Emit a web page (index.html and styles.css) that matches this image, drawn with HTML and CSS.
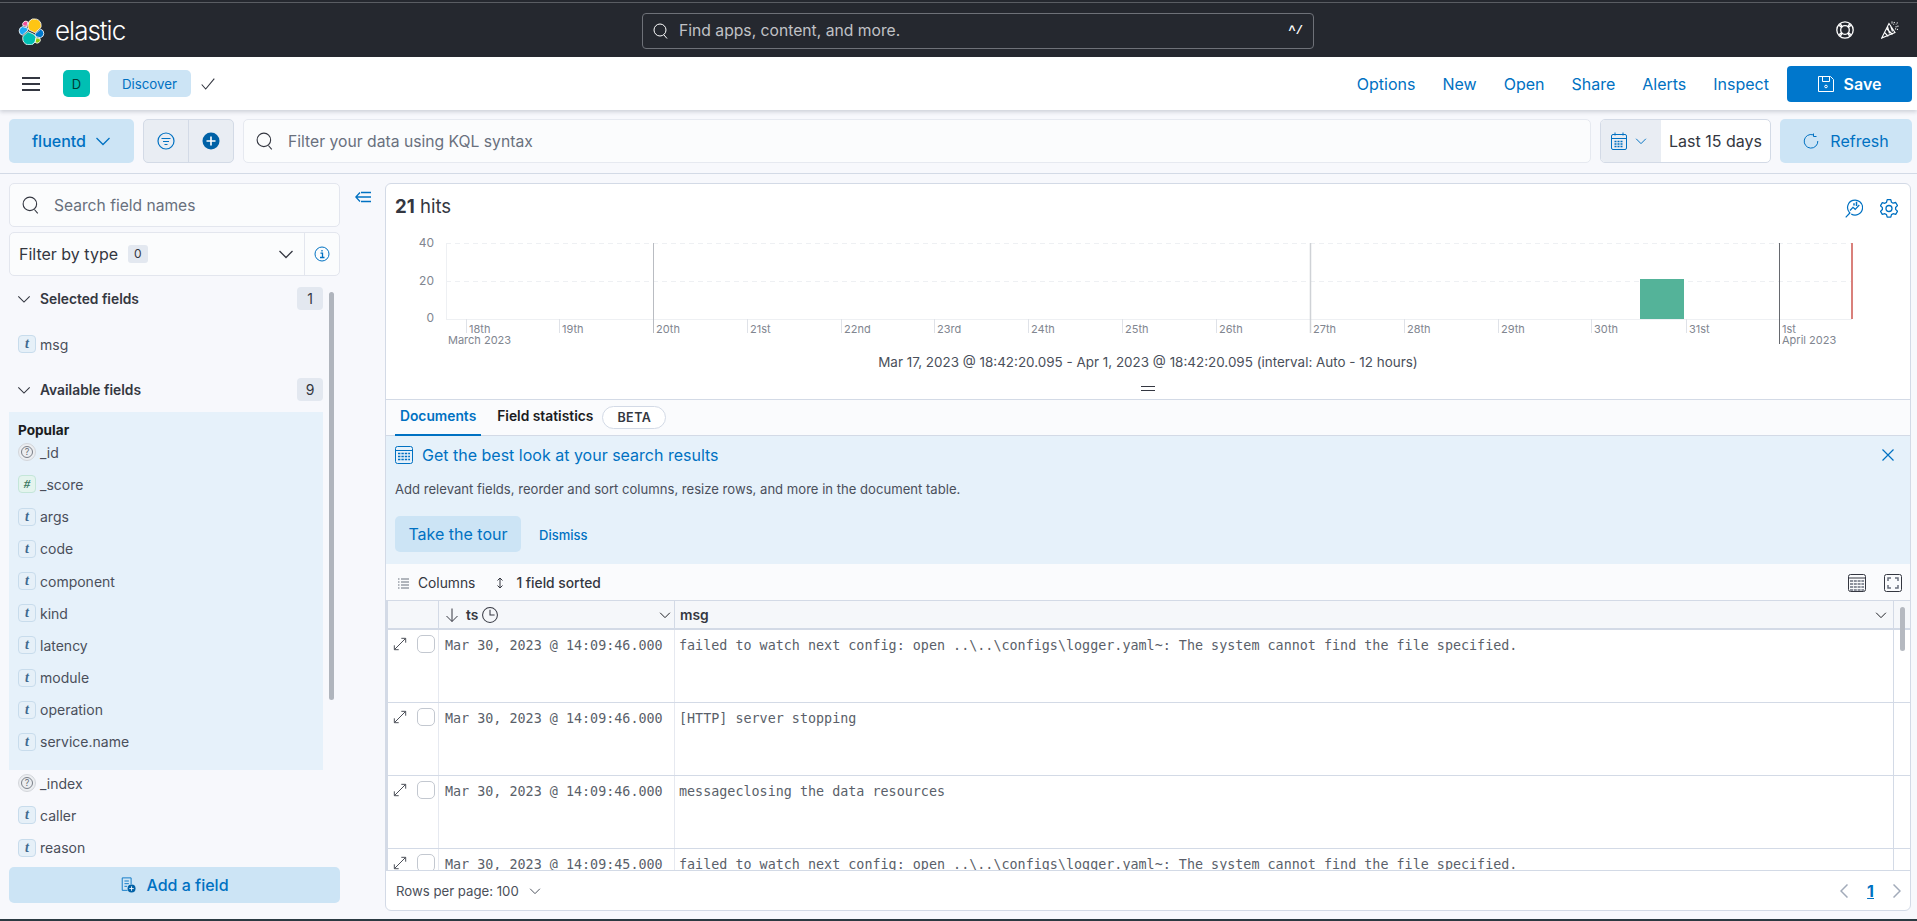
FILE: index.html
```html
<!DOCTYPE html>
<html lang="en">
<head>
<meta charset="utf-8">
<title>Discover - Elastic</title>
<link rel="stylesheet" href="styles.css">
</head>
<body>
<svg class="sprite" xmlns="http://www.w3.org/2000/svg">
  <symbol id="i-search" viewBox="0 0 16 16"><circle cx="7" cy="7" r="6" fill="none" stroke="currentColor"/><path d="M11 12l3 3.5" fill="none" stroke="currentColor"/></symbol>
  <symbol id="i-chev" viewBox="0 0 16 16"><path d="M1.500 5l6.500 6.500L14.500 5" fill="none" stroke="currentColor" stroke-width="1.300"/></symbol>
  <symbol id="i-expand" viewBox="0 0 16 16"><path d="M2 14L14 2M9.500 1.500h5v5M1.500 9.500v5h5" fill="none" stroke="currentColor"/></symbol>
</svg>

<div class="topline"></div>
<header class="globalbar">
  <a class="brand">
    <svg class="logo" viewBox="0 0 32 32"><g stroke="#fff" stroke-width="1"><path fill="#FEC514" d="M13.100 14.300l7 3.200 7-6.200a8 8 0 0 0 .3-2.300 8 8 0 0 0-14.500-4.700l-1.200 6.100z"/><path fill="#00BFB3" d="M5.900 21.700a8.300 8.300 0 0 0-.3 2.300 8 8 0 0 0 14.600 4.600l1.200-6-2.600-3.300-7-3.200z"/><path fill="#F04E98" d="M5.800 9l4.800 1.100 1.100-5.500a3.800 3.800 0 0 0-5.900 4.400"/><path fill="#1BA9F5" d="M5.400 10.200a5.300 5.300 0 0 0-.3 10.200l6.800-6.100-1.200-2.700z"/><path fill="#93C90E" d="M20.300 28.900a3.800 3.800 0 0 0 5.900-4.400l-4.800-1.100z"/><path fill="#0077CC" d="M21.300 22.200l5.300 1.200a5.300 5.300 0 0 0 .2-10.200l-6.900 6z"/></g></svg>
    <span class="brand-name">elastic</span>
  </a>
  <div class="globalsearch">
    <svg class="ic16"><use href="#i-search"/></svg>
    <span class="globalsearch-text">Find apps, content, and more.</span>
    <span class="kbd">^/</span>
  </div>
  <div class="globalicons">
    <svg class="ic18" viewBox="0 0 18 18" fill="none" stroke="#fff" stroke-width="1.300"><circle cx="9" cy="9" r="8.200"/><circle cx="9" cy="9" r="4.300"/><path d="M2.900 4.300l3.200 2.300M4.300 2.900l2.300 3.200M15.100 4.300l-3.200 2.300M13.700 2.900l-2.300 3.200M2.900 13.700l3.200-2.300M4.300 15.100l2.300-3.200M15.100 13.700l-3.200-2.300M13.700 15.100l-2.300-3.200"/></svg>
    <svg class="ic18" viewBox="0 0 18 18" fill="none" stroke="#fff" stroke-width="1.100"><path d="M8 2.500L.7 17l13.300-5.500zM5.500 7.500l6 6M3.500 11.500l3.800 3.800M6.500 5.500l2 7M9.500 4.500l2 6"/><path d="M11 .5v2.500M13.500 1l-1 2.500M16.500 1.500L15 3.500M17.500 5l-3 1M17 8.500l-3-.7" stroke-dasharray="1.200 .8"/></svg>
  </div>
</header>

<nav class="appbar">
  <button class="burger" aria-label="Menu"><span></span><span></span><span></span></button>
  <span class="avatar">D</span>
  <span class="crumb">Discover</span>
  <svg class="crumb-check" viewBox="0 0 14 12" fill="none" stroke="#343741" stroke-width="1.100"><path d="M.7 6.500l4 4.500L13.300.7"/></svg>
  <div class="appmenu">
    <a>Options</a><a>New</a><a>Open</a><a>Share</a><a>Alerts</a><a>Inspect</a>
    <button class="btn-save">
      <svg class="ic16" viewBox="0 0 16 16" fill="none" stroke="#fff"><path d="M.5.500h12l3 3v12H.500zM4.500.5v5h7v-5"/><circle cx="8" cy="10.500" r="1.300"/></svg>
      Save
    </button>
  </div>
</nav>

<section class="querybar">
  <button class="btn-light btn-index">fluentd <svg class="ic16"><use href="#i-chev"/></svg></button>
  <div class="btngroup">
    <span class="btngroup-item"><svg class="ic18" viewBox="0 0 18 18" fill="none" stroke="#0071c2" stroke-width="1.200"><circle cx="9" cy="9" r="8"/><path d="M4.500 6.500h9M6 9.500h6M7.500 12.500h3"/></svg></span>
    <span class="btngroup-item"><svg class="ic18" viewBox="0 0 18 18"><circle cx="9" cy="9" r="8.500" fill="#0061a6"/><path d="M9 4.500v9M4.500 9h9" stroke="#fff" stroke-width="1.600"/></svg></span>
  </div>
  <div class="kql">
    <svg class="ic18 muted"><use href="#i-search"/></svg>
    <span>Filter your data using KQL syntax</span>
  </div>
  <div class="datepicker">
    <span class="datepicker-pre">
      <svg class="ic16 cal" viewBox="0 0 16 18" fill="none" stroke="#0071c2"><rect x=".5" y="2.500" width="15" height="15" rx="1.500"/><path d="M.5 6.500h15M4 .5v3M12 .5v3"/><path d="M3.500 9.500h9M3.500 12h9M3.500 14.500h9" stroke-width="1.400" stroke-dasharray="2 1"/></svg>
      <svg class="ic12"><use href="#i-chev"/></svg>
    </span>
    <span class="datepicker-value">Last 15 days</span>
  </div>
  <button class="btn-light btn-refresh">
    <svg class="ic16" viewBox="0 0 16 16" fill="none" stroke="#0071c2"><path d="M10 1.800A6.800 6.800 0 1 0 14.800 8M10.500 .5v3h3"/></svg>
    Refresh
  </button>
</section>

<div class="workspace">
  <aside class="sidebar">
    <div class="field-search">
      <svg class="ic18 muted"><use href="#i-search"/></svg>
      <span>Search field names</span>
    </div>
    <div class="type-filter">
      <span class="type-filter-label">Filter by type</span>
      <span class="type-filter-count">0</span>
      <svg class="ic16 chev-type"><use href="#i-chev"/></svg>
      <span class="type-filter-info"><svg class="ic16" viewBox="0 0 16 16" fill="none" stroke="#0071c2"><circle cx="8" cy="8" r="7"/><path d="M6.500 7.200h2v4.300M6 11.500h4.500M8 4v1.500" stroke-width="1.300"/></svg></span>
    </div>
    <div class="fieldlist">
      <div class="section-head first"><svg class="ic14"><use href="#i-chev"/></svg><span class="section-title">Selected fields</span><span class="section-count">1</span></div>
      <div class="field"><span class="tok tok-t">t</span>msg</div>
      <div class="section-head"><svg class="ic14"><use href="#i-chev"/></svg><span class="section-title">Available fields</span><span class="section-count">9</span></div>
      <div class="popular">
        <div class="popular-title">Popular</div>
        <div class="field"><span class="tok tok-q"><i>?</i></span>_id</div>
        <div class="field"><span class="tok tok-n">#</span>_score</div>
        <div class="field"><span class="tok tok-t">t</span>args</div>
        <div class="field"><span class="tok tok-t">t</span>code</div>
        <div class="field"><span class="tok tok-t">t</span>component</div>
        <div class="field"><span class="tok tok-t">t</span>kind</div>
        <div class="field"><span class="tok tok-t">t</span>latency</div>
        <div class="field"><span class="tok tok-t">t</span>module</div>
        <div class="field"><span class="tok tok-t">t</span>operation</div>
        <div class="field"><span class="tok tok-t">t</span>service.name</div>
      </div>
      <div class="rest">
        <div class="field"><span class="tok tok-q"><i>?</i></span>_index</div>
        <div class="field"><span class="tok tok-t">t</span>caller</div>
        <div class="field"><span class="tok tok-t">t</span>reason</div>
      </div>
      <span class="sidebar-thumb"></span>
    </div>
    <button class="btn-light btn-add">
      <svg class="ic16" viewBox="0 0 16 18" fill="none" stroke="#0071c2"><path d="M1.500 1h10v7M1.500 1v14h6M4 4.500h5M4 7.500h5M4 10.500h3"/><circle cx="12" cy="13" r="4.500" fill="#0061a6" stroke="none"/><path d="M12 10.500v5M9.500 13h5" stroke="#fff"/></svg>
      Add a field
    </button>
  </aside>

  <div class="togglecol">
    <svg class="toggle" viewBox="0 0 16 12" fill="none" stroke="#0071c2" stroke-width="1.300"><path d="M5 1.500L.8 6 5 10.500M1 6h15M6 1.500h10M6 10.500h10"/></svg>
  </div>

  <main class="panel">
    <div class="hitsrow">
      <span class="hits"><b>21</b> hits</span>
      <span class="hits-icons">
        <svg class="ic-tool" viewBox="0 0 18 19" fill="none" stroke="#0071c2" stroke-width="1.200"><path d="M4.500 13.600A7.500 7.500 0 1 1 6.200 15M5.300 13.500l-4.600 4.800M5 11.500l3-3.200 2.200 2L14.300 6"/><path d="M9 6.500V4.200M11.500 7V2.700" stroke-width="1.500"/></svg>
        <svg class="ic-tool" viewBox="0 0 18 19" fill="none" stroke="#0071c2" stroke-width="1.300" stroke-linejoin="round"><path d="M7.200.7h3.600l.7 2.600 1.600.9 2.600-.7 1.800 3.100-1.900 1.900v1.900l1.900 1.900-1.800 3.100-2.600-.7-1.600.9-.7 2.600H7.200l-.7-2.600-1.600-.9-2.600.7L.5 12.400l1.900-1.900V8.600L.5 6.700l1.800-3.100 2.600.7 1.600-.9z"/><circle cx="9" cy="9.500" r="3"/></svg>
      </span>
    </div>
    <svg class="chart" width="1524" height="120" viewBox="0 0 1524 120">
      <g stroke="#eef0f3" fill="none">
        <path d="M60 9.500h1406M60 47.500h1406" stroke-dasharray="5 4"/>
        <path d="M60.500 9v76M60 85.500h1406"/>
      </g>
      <g stroke="#dfe2e8">
        <path d="M80.500 85v14M173.500 85v14M361.500 85v14M455.500 85v14M548.500 85v14M642.500 85v14M736.500 85v14M830.500 85v14M1018.500 85v14M1112.500 85v14M1205.500 85v14M1300.500 85v14"/>
      </g>
      <path d="M267.500 9v90" stroke="#b9bcc2"/>
      <path d="M924.500 9v90" stroke="#cfd2d6" stroke-width="1.500"/>
      <path d="M1393.500 9v101" stroke="#66696f"/>
      <rect x="1254" y="45" width="44" height="40" fill="#54b399"/>
      <rect x="1465" y="9" width="2" height="76" fill="#d9807b"/>
      <g class="chart-y" text-anchor="end">
        <text x="48" y="13">40</text><text x="48" y="51">20</text><text x="48" y="88">0</text>
      </g>
      <g class="chart-x">
        <text x="83" y="99">18th</text><text x="176" y="99">19th</text><text x="270" y="99">20th</text><text x="364" y="99">21st</text><text x="458" y="99">22nd</text><text x="551" y="99">23rd</text><text x="645" y="99">24th</text><text x="739" y="99">25th</text><text x="833" y="99">26th</text><text x="927" y="99">27th</text><text x="1021" y="99">28th</text><text x="1115" y="99">29th</text><text x="1208" y="99">30th</text><text x="1303" y="99">31st</text><text x="1396" y="99">1st</text>
        <text x="62" y="110">March 2023</text><text x="1396" y="110">April 2023</text>
      </g>
    </svg>
    <div class="interval">Mar 17, 2023 @ 18:42:20.095 - Apr 1, 2023 @ 18:42:20.095 (interval: Auto - 12 hours)</div>
    <div class="resizer"><span></span></div>

    <div class="tabs">
      <span class="tab tab-active">Documents</span>
      <span class="tab">Field statistics</span>
      <span class="beta">BETA</span>
    </div>

    <div class="callout">
      <div class="callout-title">
        <svg class="ic18" viewBox="0 0 18 18" fill="none" stroke="#0071c2"><rect x=".5" y=".5" width="17" height="17" rx="2"/><path d="M.5 4.500h17"/><path d="M3 7.500h12M3 10.500h12M3 13.500h12" stroke-width="1.500" stroke-dasharray="2.400 1"/></svg>
        Get the best look at your search results
        <svg class="callout-close" viewBox="0 0 12 12" fill="none" stroke="#0071c2" stroke-width="1.200"><path d="M.5.500l11 11M11.500.500l-11 11"/></svg>
      </div>
      <p class="callout-body">Add relevant fields, reorder and sort columns, resize rows, and more in the document table.</p>
      <div class="callout-actions">
        <button class="btn-light btn-tour">Take the tour</button>
        <a class="dismiss">Dismiss</a>
      </div>
    </div>

    <div class="gridtools">
      <svg class="ic12 tool" viewBox="0 0 12 12" stroke="#69707d" fill="none"><path d="M1 2h1.500M4 2h8M1 5h1.500M4 5h8M1 8h1.500M4 8h8M1 11h1.500M4 11h8"/></svg>
      <span class="tool-label">Columns</span>
      <svg class="ic12 tool tool-sort" viewBox="0 0 12 12" stroke="#343741" fill="none"><path d="M6 1v10M3.500 3.500L6 1l2.500 2.500M3.500 8.500L6 11l2.500-2.500"/></svg>
      <span class="tool-label tool-medium">1 field sorted</span>
      <span class="tool-right">
        <svg class="ic18" viewBox="0 0 18 18" fill="none" stroke="#343741"><rect x=".5" y=".5" width="17" height="17" rx="2"/><path d="M.5 4h17"/><path d="M2 7h14M2 10h14M2 13h14M2 16h14" stroke="#69707d" stroke-width="1.500" stroke-dasharray="3 .8"/></svg>
        <svg class="ic18" viewBox="0 0 18 18" fill="none" stroke="#343741"><rect x=".5" y=".5" width="17" height="17" rx="2"/><path d="M7 4H4v3M11 4h3v3M7 14H4v-3M11 14h3v-3" stroke="#69707d" stroke-width="1.500"/></svg>
      </span>
    </div>

    <div class="grid">
      <div class="grid-head">
        <span class="cell-control"></span>
        <span class="cell-ts head-ts">
          <svg class="ic14" viewBox="0 0 14 14" fill="none" stroke="#343741"><path d="M7 .5v13M1.500 8L7 13.500 12.500 8"/></svg>
          <b>ts</b>
          <svg class="ic16 clock" viewBox="0 0 14 14" fill="none" stroke="#343741" stroke-width=".9"><circle cx="7" cy="7" r="6.500"/><path d="M7 2.500V7h4"/></svg>
          <svg class="ic12 head-chev"><use href="#i-chev"/></svg>
        </span>
        <span class="cell-msg head-msg"><b>msg</b><svg class="ic12 head-chev"><use href="#i-chev"/></svg></span>
        <span class="cell-scroll"></span>
      </div>
      <div class="grid-row">
        <span class="cell-control"><svg class="ic14"><use href="#i-expand"/></svg><span class="check"></span></span>
        <span class="cell-ts">Mar 30, 2023 @ 14:09:46.000</span>
        <span class="cell-msg">failed to watch next config: open ..\..\configs\logger.yaml~: The system cannot find the file specified.</span>
        <span class="cell-scroll"></span>
      </div>
      <div class="grid-row">
        <span class="cell-control"><svg class="ic14"><use href="#i-expand"/></svg><span class="check"></span></span>
        <span class="cell-ts">Mar 30, 2023 @ 14:09:46.000</span>
        <span class="cell-msg">[HTTP] server stopping</span>
        <span class="cell-scroll"></span>
      </div>
      <div class="grid-row">
        <span class="cell-control"><svg class="ic14"><use href="#i-expand"/></svg><span class="check"></span></span>
        <span class="cell-ts">Mar 30, 2023 @ 14:09:46.000</span>
        <span class="cell-msg">messageclosing the data resources</span>
        <span class="cell-scroll"></span>
      </div>
      <div class="grid-row">
        <span class="cell-control"><svg class="ic14"><use href="#i-expand"/></svg><span class="check"></span></span>
        <span class="cell-ts">Mar 30, 2023 @ 14:09:45.000</span>
        <span class="cell-msg">failed to watch next config: open ..\..\configs\logger.yaml~: The system cannot find the file specified.</span>
        <span class="cell-scroll"></span>
      </div>
      <span class="grid-thumb"></span>
    </div>

    <div class="gridfoot">
      <span class="rows">Rows per page: 100</span>
      <svg class="ic12 rows-chev"><use href="#i-chev"/></svg>
      <span class="pager">
        <svg class="pager-arrow" viewBox="0 0 8 14" fill="none" stroke="#a2abba" stroke-width="1.500"><path d="M7.500.5L1 7l6.500 6.500"/></svg>
        <a class="pager-num">1</a>
        <svg class="pager-arrow" viewBox="0 0 8 14" fill="none" stroke="#a2abba" stroke-width="1.500"><path d="M.5.500L7 7l-6.500 6.500"/></svg>
      </span>
    </div>
  </main>
</div>
<div class="bottomline"></div>
</body>
</html>
```

FILE: styles.css
```css
* { box-sizing: border-box; }
html, body { margin: 0; height: 100%; }
body {
  width: 1917px; height: 921px; overflow: hidden;
  display: flex; flex-direction: column;
  background: #f7f8fc; color: #343741;
  font-family: Inter, "Liberation Sans", sans-serif; font-size: 14px;
}
button { font: inherit; border: 0; cursor: pointer; }
.sprite { display: none; }
.ic12 { width: 12px; height: 12px; flex: none; }
.ic14 { width: 14px; height: 14px; flex: none; }
.ic16 { width: 16px; height: 16px; flex: none; }
.ic18 { width: 18px; height: 18px; flex: none; }
.ic-tool { width: 18px; height: 19px; flex: none; }
.muted { color: #343741; }

.topline { height: 3px; flex: none; background: #25282f; border-bottom: 1px solid #5a5d63; }

.globalbar {
  height: 54px; flex: none; background: #25282f; color: #fff;
  display: flex; align-items: center; padding: 0 18px;
  position: relative;
}
.brand { display: flex; align-items: center; gap: 10px; width: 624px; }
.logo { width: 27px; height: 27px; flex: none; margin-top: 3px; }
.brand-name { font-size: 26px; font-weight: 300; letter-spacing: -1px; color: #fff; }
.globalsearch {
  width: 672px; height: 36px; display: flex; align-items: center; gap: 10px;
  padding: 0 10px; color: #fff; border: 1px solid #6e7178; border-radius: 4px; margin-top: 1px;
}
.globalsearch-text { flex: 1; font-size: 15.700px; color: #c0c2c6; }
.kbd { font: bold 12px "Liberation Mono", monospace; color: #fff; }
.globalicons { margin-left: auto; display: flex; gap: 27px; }

.appbar {
  height: 53px; flex: none; background: #fff; display: flex; align-items: center;
  padding: 0 5px 0 22px; box-shadow: 0 2px 4px rgba(60, 70, 90, .22); position: relative; z-index: 2;
}
.burger { width: 18px; height: 14px; padding: 0; background: none; display: flex; flex-direction: column; justify-content: space-between; margin-right: 23px; }
.burger span { height: 2px; background: #343741; display: block; }
.avatar {
  width: 27px; height: 27px; border-radius: 5px; background: #00bfb3; color: #003d36;
  display: flex; align-items: center; justify-content: center; font-size: 13px;
}
.crumb {
  margin-left: 18px; width: 83px; height: 27px; border-radius: 5px; background: #cce4f5;
  color: #0071c2; font-size: 13.300px; font-weight: 400; display: flex; align-items: center; justify-content: center;
}
.crumb-check { width: 14px; height: 12px; margin-left: 10px; }
.appmenu { margin-left: auto; display: flex; align-items: center; gap: 27px; }
.appmenu a { color: #0071c2; font-size: 16px; }
.btn-save {
  width: 125px; height: 36px; border-radius: 4px; background: #07c; color: #fff; margin-left: -9px;
  display: flex; align-items: center; justify-content: center; gap: 10px; font-size: 16px; font-weight: 600;
}

.querybar {
  height: 64px; flex: none; display: flex; gap: 9px; padding: 9px 5px 0 9px;
  border-bottom: 1px solid #d3dae6;
}
.btn-light { background: #cce4f5; color: #0071c2; border-radius: 5px; display: flex; align-items: center; justify-content: center; }
.btn-index { width: 125px; height: 44px; font-size: 16px; gap: 9px; font-weight: 500; }
.btngroup { width: 91px; height: 44px; display: flex; background: #e9edf3; border: 1px solid #d3dae6; border-radius: 5px; }
.btngroup-item { flex: 1; display: flex; align-items: center; justify-content: center; }
.btngroup-item + .btngroup-item { border-left: 1px solid #d3dae6; }
.kql {
  flex: 1; height: 44px; background: #fbfcfd; border: 1px solid #e6e9f0; border-radius: 5px;
  display: flex; align-items: center; gap: 14px; padding: 0 12px; font-size: 15.700px; color: #69707d;
}
.datepicker { width: 171px; height: 44px; display: flex; border: 1px solid #d3dae6; border-radius: 5px; background: #fff; overflow: hidden; }
.datepicker-pre { width: 60px; background: #e9edf3; display: flex; align-items: center; gap: 8px; padding-left: 10px; color: #0071c2; }
.cal { height: 18px; }
.datepicker-value { flex: 1; display: flex; align-items: center; justify-content: center; font-size: 16px; }
.btn-refresh { width: 132px; height: 44px; gap: 11px; font-size: 16px; }

.workspace { flex: 1; min-height: 0; display: flex; padding: 9px 6px 8px 9px; }
.sidebar { width: 331px; flex: none; display: flex; flex-direction: column; }
.field-search {
  height: 44px; flex: none; background: #fbfcfd; border: 1px solid #e3e6ee; border-radius: 5px;
  display: flex; align-items: center; gap: 14px; padding: 0 12px; font-size: 15.600px; color: #69707d;
}
.type-filter {
  height: 44px; flex: none; margin-top: 5px; background: #fbfcfd; border: 1px solid #e3e6ee; border-radius: 5px;
  display: flex; align-items: center; padding-left: 9px; font-size: 16px;
}
.type-filter-label { font-weight: 400; }
.type-filter-count { margin-left: 10px; background: #e3e8f0; border-radius: 3px; padding: 0 6px; height: 18px; font-size: 12px; line-height: 18px; }
.chev-type { margin-left: auto; margin-right: 10px; }
.type-filter-info { width: 35px; height: 100%; border-left: 1px solid #e3e6ee; display: flex; align-items: center; justify-content: center; }
.fieldlist { flex: 1; min-height: 0; position: relative; overflow: hidden; padding-right: 17px; }
.section-head { height: 23px; display: flex; align-items: center; margin-top: 18px; padding-left: 8px; }
.section-head.first { margin-top: 11px; }
.section-title { margin-left: 9px; font-size: 13.800px; font-weight: 600; flex: 1; }
.section-count { width: 26px; height: 23px; background: #e3e8f0; border-radius: 4px; text-align: center; line-height: 23px; font-size: 14px; }
.field { height: 32.200px; display: flex; align-items: center; padding-left: 9px; font-size: 14px; color: #4a4f5a; gap: 4px; }
.section-head + .field { margin-top: 18px; margin-bottom: 0; }
.tok { width: 18px; height: 18px; flex: none; display: flex; align-items: center; justify-content: center; border-radius: 4px; }
.tok-t { background: #e6f0f8; border: 1px solid #c8dcec; color: #3f6a8f; font: italic bold 14px "Liberation Serif", serif; }
.tok-n { background: #e4f4ee; border: 1px solid #c4e6d9; color: #3d7a63; font: italic bold 13px "Liberation Serif", serif; }
.tok-q { background: #eceef1; border: 1px solid #d3d6db; border-radius: 50%; }
.tok-q i { width: 12px; height: 12px; border: 1px solid #7a7f88; border-radius: 50%; font: 9px/10px Inter, sans-serif; text-align: center; color: #6a6f78; display: block; }
.popular { margin-top: 11px; height: 358px; background: #e6f1fa; padding-top: 8px; }
.popular-title { font-weight: 700; font-size: 13.600px; line-height: 20px; padding-left: 9px; color: #1a1c21; margin-bottom: -4px; }
.rest { margin-top: -3px; }
.sidebar-thumb { position: absolute; left: 320px; top: 16px; width: 5px; height: 408px; background: #b0b5bd; border-radius: 3px; }
.btn-add { height: 36px; flex: none; gap: 10px; font-size: 16px; font-weight: 500; margin-bottom: 8px; }

.togglecol { width: 45px; flex: none; padding: 8px 0 0 15px; }
.toggle { width: 16px; height: 12px; display: block; }

.panel { flex: 1; min-width: 0; background: #fff; border: 1px solid #d3dae6; border-radius: 6px; display: flex; flex-direction: column; overflow: hidden; }
.hitsrow { height: 50px; flex: none; display: flex; align-items: center; padding: 0 12px 7px 9px; }
.hits { font-size: 18.600px; }
.hits b { font-weight: 700; }
.hits-icons { margin-left: auto; display: flex; gap: 17px; margin-top: 5px; }
.chart { display: block; flex: none; }
.chart text { font-family: Inter, sans-serif; font-size: 11px; fill: #818690; }
.chart-y text { font-size: 12px; }
.interval { height: 20px; flex: none; text-align: center; font-size: 13.450px; line-height: 18px; color: #4a4f5a; margin-top: -1px; }
.resizer { height: 27px; flex: none; border-bottom: 1px solid #d3dae6; display: flex; justify-content: center; padding-top: 13px; }
.resizer span { width: 14px; height: 5px; border-top: 1px solid #343741; border-bottom: 1px solid #343741; display: block; }
.tabs { height: 36px; flex: none; background: #fafbfd; border-bottom: 1px solid #d3dae6; display: flex; align-items: center; padding-left: 9px; font-size: 13.800px; font-weight: 600; }
.tab { height: 36px; line-height: 32px; padding: 0 5px; color: #1a1c21; }
.tab-active { color: #0071c2; border-bottom: 2px solid #0071c2; margin-right: 11px; }
.beta { margin-left: 4px; width: 64px; height: 23px; line-height: 21px; text-align: center; border: 1px solid #d3dae6; border-radius: 12px; background: #fff; font-size: 12.500px; letter-spacing: .5px; margin-top: -1px; }
.callout { height: 128px; flex: none; background: #e6f1fa; padding: 9px 16px 0 9px; }
.callout-title { display: flex; align-items: center; gap: 9px; font-size: 16px; color: #0071c2; font-weight: 400; height: 20px; }
.callout-close { width: 12px; height: 12px; margin-left: auto; }
.callout-body { margin: 14px 0 0; font-size: 13.100px; line-height: 20px; color: #4a4f5a; }
.callout-actions { display: flex; align-items: center; gap: 18px; margin-top: 17px; }
.btn-tour { width: 126px; height: 36px; font-size: 16px; }
.dismiss { font-size: 13px; font-weight: 500; color: #0071c2; margin-top: 2px; }
.gridtools { height: 37px; flex: none; background: #fafbfd; display: flex; align-items: center; padding: 2px 8px 0 11px; font-size: 13.800px; border-bottom: 1px solid #d3dae6; }
.tool-label { margin-left: 9px; font-weight: 400; }
.tool-sort { margin-left: 19px; }
.tool-medium { margin-left: 10px; font-weight: 500; }
.tool-right { margin-left: auto; display: flex; gap: 18px; }
.grid { height: 270px; flex: none; position: relative; overflow: hidden; border-left: 2px solid #d3dae6; border-bottom: 1px solid #d3dae6; }
.grid-head { height: 29px; display: flex; background: #f5f7fa; border-bottom: 2px solid #d3dae6; }
.grid-row { height: 73px; display: flex; border-bottom: 1px solid #d3dae6; font: 13.400px/16px "DejaVu Sans Mono", monospace; color: #5a5f6a; }
.cell-control { width: 51px; flex: none; display: flex; padding: 7px 0 0 5px; gap: 10px; align-items: flex-start; border-right: 1px solid #e6e9f0; color: #343741; }
.check { width: 18px; height: 18px; margin-top: -2px; border: 1px solid #c3c8d0; border-radius: 5px; background: #fff; }
.cell-ts { width: 236px; flex: none; padding: 8px 0 0 6px; border-right: 1px solid #e6e9f0; }
.cell-msg { flex: 1; padding: 8px 0 0 4px; white-space: pre; overflow: hidden; }
.cell-scroll { width: 17px; flex: none; border-left: 1px solid #d3dae6; }
.head-ts, .head-msg { display: flex; align-items: center; padding-top: 0; font: 13.800px Inter, sans-serif; color: #343741; border-color: #d3dae6; }
.head-ts { gap: 7px; padding-left: 6px; }
.head-ts b, .head-msg b { font-weight: 600; }
.clock { margin-left: -3px; }
.head-chev { margin-left: auto; margin-right: 3px; color: #1a1c21; }
.head-msg { padding-left: 5px; padding-right: 3px; }
.grid-head .cell-control { border-color: #d3dae6; }
.grid-thumb { position: absolute; right: 5px; top: 6px; width: 5px; height: 44px; background: #b5b9c0; border-radius: 3px; }
.gridfoot { flex: 1; display: flex; align-items: center; padding: 0 9px 0 10px; font-size: 13.200px; color: #4a4f5a; }
.rows-chev { margin-left: 10px; }
.pager { margin-left: auto; display: flex; align-items: center; gap: 19px; }
.pager-arrow { width: 8px; height: 14px; }
.pager-num { color: #0071c2; font-weight: 700; font-size: 16px; text-decoration: underline; }
.bottomline { height: 2px; flex: none; background: #2b3a42; }
```
